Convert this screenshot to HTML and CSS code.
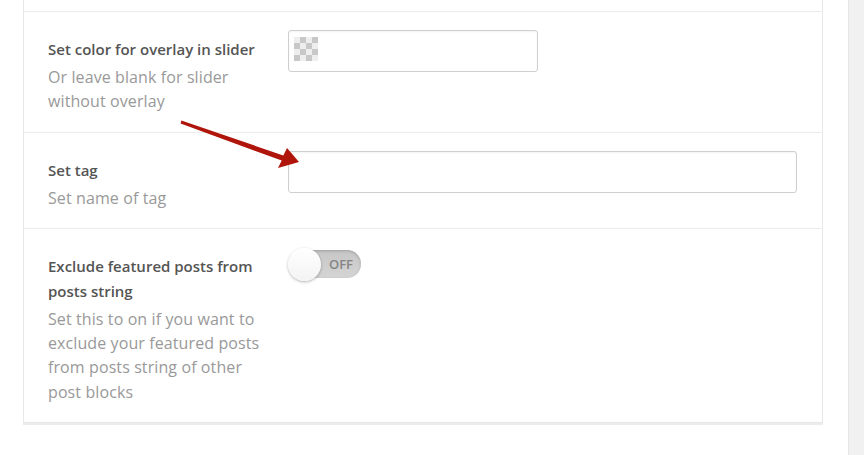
FILE: index.html
```html
<!DOCTYPE html>
<html>
<head>
<meta charset="utf-8">
<link rel="stylesheet" href="styles.css">
</head>
<body>
<div class="page">
  <div class="main">
    <div class="card">
      <div class="row-stub"></div>
      <div class="row">
        <div class="info">
          <div class="label">Set color for overlay in slider</div>
          <div class="desc">Or leave blank for slider without overlay</div>
        </div>
        <div class="field">
          <div class="input input-color"><span class="checker"></span></div>
        </div>
      </div>
      <div class="row">
        <div class="info">
          <div class="label">Set tag</div>
          <div class="desc">Set name of tag</div>
        </div>
        <div class="field">
          <div class="input input-wide"></div>
        </div>
      </div>
      <div class="row last">
        <div class="info">
          <div class="label">Exclude featured posts from posts string</div>
          <div class="desc">Set this to on if you want to exclude your featured posts from posts string of other post blocks</div>
        </div>
        <div class="field">
          <div class="toggle">
            <span class="knob"></span>
            <span class="toggle-text">OFF</span>
          </div>
        </div>
      </div>
    </div>
  </div>
  <div class="sidebar"></div>
</div>
<svg class="arrow" width="864" height="455" viewBox="0 0 864 455">
  <polygon fill="#b0150c" points="181.4,120.6 283.3,155.4 287,148 299,162 278,168 281.7,160.6 180.6,123.4"/>
</svg>
</body>
</html>
```
FILE: styles.css
```css
html, body {
  margin: 0;
  padding: 0;
  background: #fff;
}
body {
  font-family: "Open Sans", "Liberation Sans", sans-serif;
  width: 864px;
  height: 455px;
  overflow: hidden;
  position: relative;
}
.page {
  display: flex;
  height: 455px;
}
.main {
  width: 848px;
  padding-left: 23px;
  box-sizing: border-box;
}
.sidebar {
  width: 16px;
  background: #f1f1f1;
  border-left: 1px solid #e6e6e6;
  box-sizing: border-box;
}
.card {
  width: 800px;
  box-sizing: border-box;
  border: 1px solid #e8e8e8;
  border-top: none;
  background: #fff;
  box-shadow: 0 2px 0 #ececec;
}
.row-stub {
  height: 11px;
  border-bottom: 1px solid #ececec;
}
.row {
  display: flex;
  gap: 20px;
  padding: 18px 25px 18px 24px;
  border-bottom: 1px solid #ececec;
}
.row.last {
  border-bottom: none;
}
.info {
  width: 220px;
  flex: none;
  margin-top: 7px;
}
.label {
  font-size: 15px;
  font-weight: 600;
  line-height: 25px;
  color: #555;
}
.desc {
  margin-top: 3px;
  font-size: 16px;
  letter-spacing: 0.1px;
  line-height: 24.3px;
  color: #999;
}
.field {
  flex: 1;
}
.input {
  height: 42px;
  box-sizing: border-box;
  border: 1px solid #cfcfcf;
  border-radius: 3px;
  background: #fff;
  box-shadow: inset 0 1px 2px rgba(0,0,0,0.05);
}
.input-color {
  width: 250px;
  padding: 6px 0 0 5px;
}
.input-wide {
  width: 509px;
}
.checker {
  display: block;
  width: 24px;
  height: 24px;
  background-color: #eee;
  background-image:
    linear-gradient(45deg, #c8c8c8 25%, transparent 25%, transparent 75%, #c8c8c8 75%),
    linear-gradient(45deg, #c8c8c8 25%, transparent 25%, transparent 75%, #c8c8c8 75%);
  background-size: 12px 12px;
  background-position: 0 0, 6px 6px;
}
.toggle {
  position: relative;
  margin-top: 3px;
  margin-left: 2px;
  width: 71px;
  height: 28px;
  border-radius: 14px;
  background: linear-gradient(#c6c6c6, #d4d4d4);
  box-shadow: inset 0 1px 3px rgba(0,0,0,0.2);
  display: flex;
  align-items: center;
  justify-content: flex-end;
  padding-right: 8px;
  box-sizing: border-box;
}
.knob {
  position: absolute;
  left: -2px;
  top: -2px;
  width: 33px;
  height: 33px;
  border-radius: 50%;
  background: linear-gradient(#fff, #f3f3f3);
  box-shadow: 0 1px 3px rgba(0,0,0,0.3);
}
.toggle-text {
  font-size: 13px;
  font-weight: 600;
  color: #858585;
}
.arrow {
  position: absolute;
  left: 0;
  top: 0;
  pointer-events: none;
}
```
